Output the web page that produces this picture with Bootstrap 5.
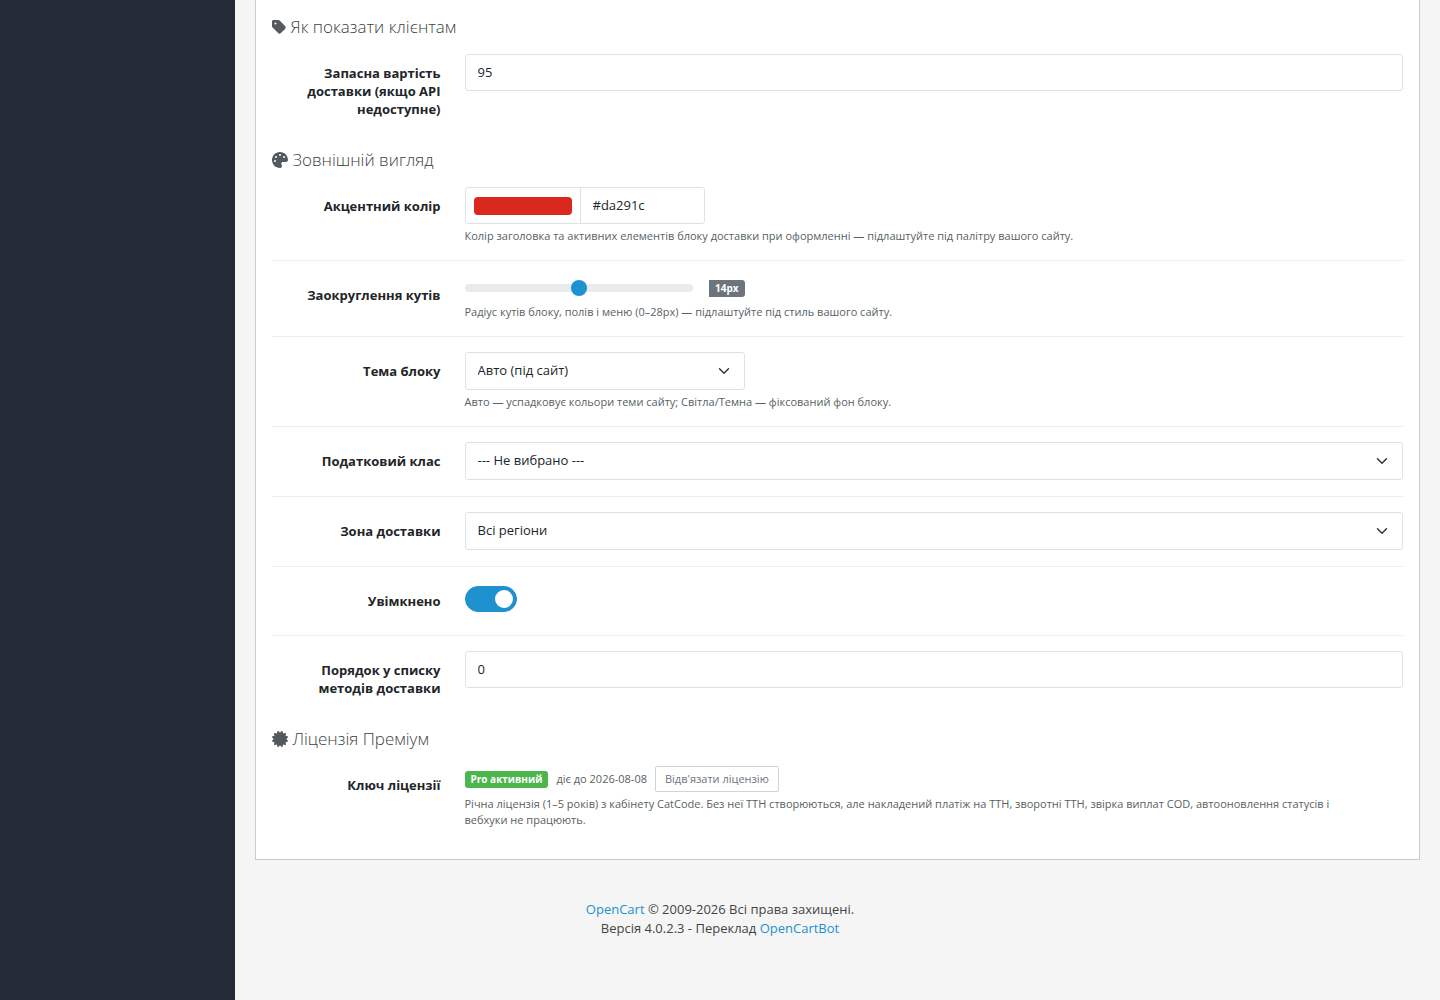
<!DOCTYPE html>
<html lang="uk">
<head>
<meta charset="utf-8">
<meta name="viewport" content="width=device-width, initial-scale=1">
<title>Налаштування доставки</title>
<link href="https://cdn.jsdelivr.net/npm/bootstrap@5.3.0/dist/css/bootstrap.min.css" rel="stylesheet">
<style>
  body { font-family: "Open Sans", "Noto Sans", sans-serif; font-size: 13px; line-height: 19px; color: #212529; background: #f5f5f5; }
  a { color: #1e91cf; text-decoration: none; }
  .side-menu { width: 235px; background: #242b36; }
  .panel { background: #fff; border: 1px solid #ccc; border-top: 0; padding: 17px 16px 31px; }
  .section-title { font-size: 17px; font-weight: 300; line-height: 20px; margin: 0 0 17px; color: #3c3f42; }
  .section-title svg { height: 16px; width: auto; fill: #54595d; vertical-align: -2px; }
  .setting { padding-bottom: 16px; }
  .setting + .setting > div, .setting + .setting > label { margin-top: 15px; }
  .setting + .setting::before { content: ""; height: 1px; background: #ededed; padding: 0; margin: 0 12px; width: calc(100% - 24px); }
  .setting.last-one { padding-bottom: 23px; }
  .panel .col-form-label { font-size: 13px; line-height: 18px; font-weight: 700; padding-top: 10px; padding-bottom: 9px; }
  .form-control, .form-select { font-size: 13px; line-height: 19px; border-color: #dee2e6; border-radius: 3px; height: 37px; padding-top: 7px; padding-bottom: 9px; color: #212529; background-color: #fff; }
  .form-select { height: 38px; }
  .accent-group { width: 240px; }
  .accent-group .form-control-color { flex: 0 0 116px; height: 37px; padding: 9px 8px 8px; }
  .form-control-color::-webkit-color-swatch { border: 0; border-radius: 4px; }
  .form-control-color::-webkit-color-swatch-wrapper { padding: 0; }
  .medium { width: 280px; }
  .hint { font-size: 11px; line-height: 16px; color: #595f64; margin-top: 4px; }
  .form-range::-webkit-slider-runnable-track { background: #e9ecef; }
  .form-range::-webkit-slider-thumb { background: #1e91cf; }
  .tag-label { font-size: 10px; line-height: 10px; padding: 3px 6px 4px; border-radius: 3px; }
  .tag-flat { border-radius: 0 3px 3px 0; background: #6c757d; }
  .tag-pro { background: #4cb64c; }
  .form-switch { min-height: 26px; padding: 0; margin-top: 4px; }
  .form-switch .form-check-input { width: 52px; height: 26px; margin: 0; float: none; display: block; }
  .form-switch .form-check-input:checked { background-color: #1e91cf; border-color: #1e91cf; }
  .term { font-size: 11px; line-height: 16px; color: #595f64; }
  .btn-unlink { font-size: 11px; line-height: 16px; padding: 4px 9px; border: 1px solid #ced4da; border-radius: 2px; color: #6c757d; background: #fff; }
  .site-footer { padding: 40px 235px 62px 0; color: #444; }
</style>
</head>
<body>
<div class="d-flex min-vh-100">
  <nav class="side-menu flex-shrink-0" aria-label="Меню"></nav>
  <div class="flex-grow-1">
    <main class="px-3 mx-1">
      <form class="panel">
        <h2 class="section-title"><svg viewBox="0 0 448 512" aria-hidden="true"><path d="M0 80V229.500c0 17 6.700 33.300 18.700 45.300l176 176c25 25 65.500 25 90.500 0L418.700 317.300c25-25 25-65.500 0-90.500l-176-176c-12-12-28.300-18.700-45.300-18.700H48C21.500 32 0 53.500 0 80zm112 32a32 32 0 1 1 0 64 32 32 0 1 1 0-64z"/></svg> Як показати клієнтам</h2>
        <div class="row setting last-one">
          <label for="cost" class="col-sm-2 col-form-label text-end">Запасна вартість доставки (якщо API недоступне)</label>
          <div class="col-sm-10"><input id="cost" type="text" class="form-control" value="95"></div>
        </div>

        <h2 class="section-title"><svg viewBox="0 0 512 512" aria-hidden="true"><path d="M512 256c0 .9 0 1.800 0 2.700c-.4 36.500-33.600 61.300-70.100 61.300H344c-26.500 0-48 21.500-48 48c0 3.400 .4 6.700 1 9.900c2.100 10.200 6.500 20 10.800 29.900c6.100 13.800 12.100 27.500 12.100 42c0 31.800-21.600 60.700-53.400 62c-3.500 .1-7 .2-10.600 .2C114.600 512 0 397.400 0 256S114.600 0 256 0S512 114.600 512 256zM128 288a32 32 0 1 0 -64 0 32 32 0 1 0 64 0zm0-96a32 32 0 1 0 0-64 32 32 0 1 0 0 64zM288 96a32 32 0 1 0 -64 0 32 32 0 1 0 64 0zm96 96a32 32 0 1 0 0-64 32 32 0 1 0 0 64z"/></svg> Зовнішній вигляд</h2>
        <div class="row setting">
          <label for="accent" class="col-sm-2 col-form-label text-end">Акцентний колір</label>
          <div class="col-sm-10">
            <div class="input-group accent-group">
              <input id="accent" type="color" class="form-control form-control-color" value="#da291c">
              <input type="text" class="form-control" value="#da291c" aria-label="Код кольору">
            </div>
            <div class="hint">Колір заголовка та активних елементів блоку доставки при оформленні — підлаштуйте під палітру вашого сайту.</div>
          </div>
        </div>
        <div class="row setting">
          <label for="radius" class="col-sm-2 col-form-label text-end">Заокруглення кутів</label>
          <div class="col-sm-10">
            <div class="medium d-flex align-items-center">
              <input id="radius" type="range" class="form-range flex-grow-1" min="0" max="28" value="14">
              <span class="badge tag-label tag-flat ms-3">14px</span>
            </div>
            <div class="hint">Радіус кутів блоку, полів і меню (0–28px) — підлаштуйте під стиль вашого сайту.</div>
          </div>
        </div>
        <div class="row setting">
          <label for="theme" class="col-sm-2 col-form-label text-end">Тема блоку</label>
          <div class="col-sm-10">
            <select id="theme" class="form-select medium"><option>Авто (під сайт)</option></select>
            <div class="hint">Авто — успадковує кольори теми сайту; Світла/Темна — фіксований фон блоку.</div>
          </div>
        </div>
        <div class="row setting">
          <label for="tax" class="col-sm-2 col-form-label text-end">Податковий клас</label>
          <div class="col-sm-10"><select id="tax" class="form-select"><option>--- Не вибрано ---</option></select></div>
        </div>
        <div class="row setting">
          <label for="zone" class="col-sm-2 col-form-label text-end">Зона доставки</label>
          <div class="col-sm-10"><select id="zone" class="form-select"><option>Всі регіони</option></select></div>
        </div>
        <div class="row setting">
          <label for="enabled" class="col-sm-2 col-form-label text-end">Увімкнено</label>
          <div class="col-sm-10"><div class="form-check form-switch"><input id="enabled" type="checkbox" role="switch" class="form-check-input" checked></div></div>
        </div>
        <div class="row setting last-one">
          <label for="order" class="col-sm-2 col-form-label text-end">Порядок у списку методів доставки</label>
          <div class="col-sm-10"><input id="order" type="text" class="form-control" value="0"></div>
        </div>

        <h2 class="section-title"><svg viewBox="0 0 512 512" aria-hidden="true"><path d="M211 7.300C205 1 196-1.400 187.600 .8s-14.900 8.900-17.100 17.300L154.700 80.600l-62-17.500c-8.400-2.400-17.400 0-23.500 6.100s-8.500 15.100-6.100 23.500l17.500 62L18.100 170.600c-8.400 2.100-15 8.700-17.300 17.100S1 205 7.300 211l46.200 45L7.300 301C1 307-1.400 316 .8 324.400s8.900 14.900 17.300 17.100l62.500 15.800-17.500 62c-2.400 8.400 0 17.400 6.100 23.500s15.100 8.500 23.500 6.100l62-17.500 15.800 62.500c2.100 8.400 8.700 15 17.100 17.300s17.300-.2 23.400-6.400l45-46.200 45 46.200c6.100 6.200 15 8.700 23.400 6.400s14.900-8.900 17.100-17.300l15.800-62.500 62 17.500c8.400 2.400 17.400 0 23.500-6.100s8.500-15.100 6.100-23.500l-17.500-62 62.500-15.800c8.400-2.100 15-8.700 17.300-17.100s-.2-17.300-6.400-23.400l-46.200-45 46.200-45c6.200-6.100 8.700-15 6.400-23.400s-8.900-14.900-17.300-17.100l-62.500-15.800 17.500-62c2.400-8.400 0-17.400-6.100-23.500s-15.100-8.500-23.500-6.100l-62 17.500L341.400 18.100c-2.100-8.400-8.700-15-17.100-17.300S307 1 301 7.300L256 53.500 211 7.300z"/></svg> Ліцензія Преміум</h2>
        <div class="row">
          <label for="unlink" class="col-sm-2 col-form-label text-end">Ключ ліцензії</label>
          <div class="col-sm-10">
            <div class="d-flex align-items-center gap-2">
              <span class="badge tag-label tag-pro">Pro активний</span>
              <span class="term">діє до 2026-08-08</span>
              <button id="unlink" type="button" class="btn btn-unlink">Відв'язати ліцензію</button>
            </div>
            <div class="hint pe-5">Річна ліцензія (1–5 років) з кабінету CatCode. Без неї ТТН створюються, але накладений платіж на ТТН, зворотні ТТН, звірка виплат COD, автооновлення статусів і вебхуки не працюють.</div>
          </div>
        </div>
      </form>
    </main>
    <footer class="site-footer text-center">
      <a href="#">OpenCart</a> © 2009-2026 Всі права захищені.<br>
      Версія 4.0.2.3 - Переклад <a href="#">OpenCartBot</a>
    </footer>
  </div>
</div>
<script src="https://cdn.jsdelivr.net/npm/bootstrap@5.3.0/dist/js/bootstrap.bundle.min.js"></script>
</body>
</html>
